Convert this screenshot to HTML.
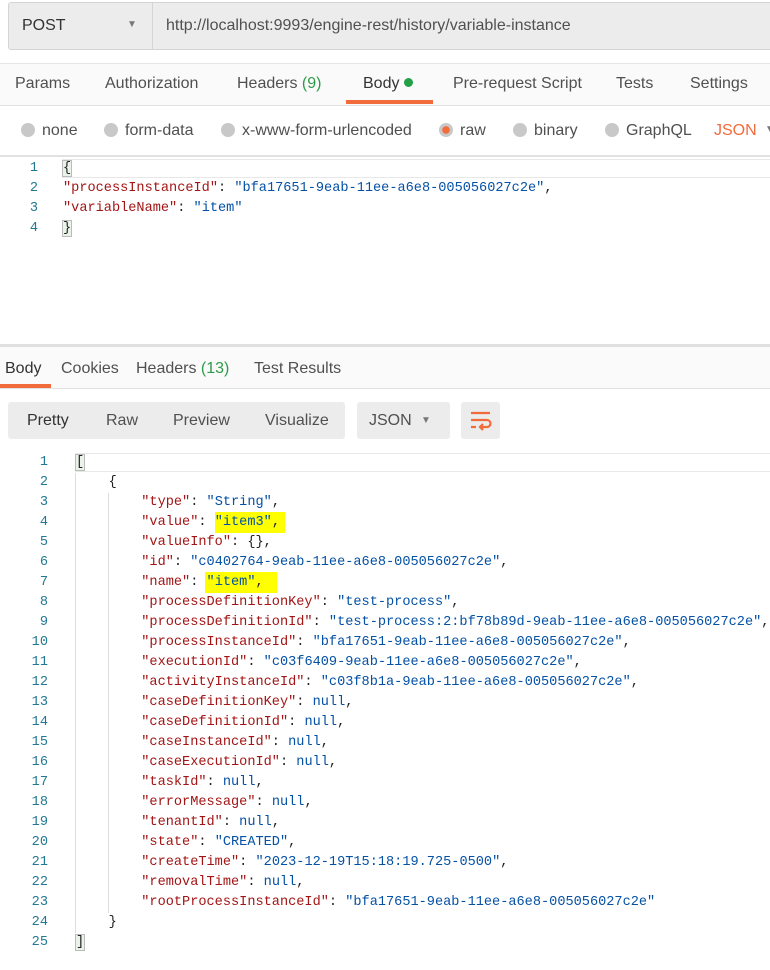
<!DOCTYPE html>
<html><head><meta charset="utf-8"><style>
*{margin:0;padding:0;box-sizing:border-box}
body{width:770px;height:970px;background:#fff;font-family:"Liberation Sans",sans-serif;color:#505050;position:relative;overflow:hidden;font-size:16px}
.a{position:absolute;white-space:nowrap}
.code{font-family:"Liberation Mono",monospace;font-size:13.6px;line-height:20px;white-space:pre}
.k{color:#a31515}.s{color:#0451a5}.p{color:#222}
.ln{color:#237893;text-align:right;width:20px}
.tab{top:75px}
.radio{display:inline-block;width:14px;height:14px;border-radius:50%;background:#c8c8c8;vertical-align:-2px;margin-right:7px}
</style></head><body>
<div class="a" style="left:8px;top:2px;width:770px;height:48px;background:#ececec;border:1px solid #d4d4d4;border-radius:3px"></div>
<div class="a" style="left:152px;top:3px;width:1px;height:46px;background:#d4d4d4"></div>
<div class="a" style="left:22px;top:17px;color:#333">POST</div>
<div class="a" style="left:127px;top:19px;font-size:10px;color:#777">▼</div>
<div class="a" style="left:166px;top:17px;color:#505050">http://localhost:9993/engine-rest/history/variable-instance</div>
<div class="a" style="left:0;top:63px;width:770px;height:1px;background:#e6e6e6"></div>
<div class="a" style="left:0;top:64px;width:770px;height:41px;background:#fafafa"></div>
<div class="a" style="left:0;top:105px;width:770px;height:1px;background:#e2e2e2"></div>
<div class="a tab" style="left:15px">Params</div>
<div class="a tab" style="left:105px">Authorization</div>
<div class="a tab" style="left:237px">Headers <span style="color:#2d9c4a">(9)</span></div>
<div class="a tab" style="left:363px;color:#333">Body <span style="display:inline-block;width:9px;height:9px;border-radius:50%;background:#22a046;vertical-align:1px"></span></div>
<div class="a" style="left:346px;top:100px;width:87px;height:4px;background:#f26b3a"></div>
<div class="a tab" style="left:453px">Pre-request Script</div>
<div class="a tab" style="left:616px">Tests</div>
<div class="a tab" style="left:690px">Settings</div>
<div class="a" style="left:21px;top:122px"><span class="radio"></span>none</div>
<div class="a" style="left:104px;top:122px"><span class="radio"></span>form-data</div>
<div class="a" style="left:221px;top:122px"><span class="radio"></span>x-www-form-urlencoded</div>
<div class="a" style="left:439px;top:122px"><span class="radio" style="background:radial-gradient(circle,#f26b3a 0 3.5px,#c8c8c8 4px)"></span>raw</div>
<div class="a" style="left:513px;top:122px"><span class="radio"></span>binary</div>
<div class="a" style="left:605px;top:122px"><span class="radio"></span>GraphQL</div>
<div class="a" style="left:714px;top:122px;color:#f26b3a">JSON</div>
<div class="a" style="left:765px;top:124px;font-size:10px;color:#777">▼</div>
<div class="a" style="left:0;top:155px;width:770px;height:2px;background:#e2e2e2"></div>
<div class="a" style="left:62px;top:159px;width:708px;height:19px;border-top:1px solid #e8e8e8;border-bottom:1px solid #e8e8e8"></div>
<div class="a code ln" style="left:18px;top:159px">1
2
3
4</div>
<div class="a code p" style="left:63px;top:159px"><span style="outline:1px solid #bbb;background:#eaf2ea">{</span>
<span class="k">"processInstanceId"</span>: <span class="s">"bfa17651-9eab-11ee-a6e8-005056027c2e"</span>,
<span class="k">"variableName"</span>: <span class="s">"item"</span>
<span style="outline:1px solid #bbb;background:#eaf2ea">}</span></div>
<div class="a" style="left:0;top:344px;width:770px;height:3px;background:#e0e0e0"></div>
<div class="a" style="left:0;top:347px;width:770px;height:41px;background:#fafafa"></div>
<div class="a" style="left:0;top:388px;width:770px;height:1px;background:#e2e2e2"></div>
<div class="a" style="left:5px;top:360px;color:#333">Body</div>
<div class="a" style="left:61px;top:360px">Cookies</div>
<div class="a" style="left:136px;top:360px">Headers <span style="color:#2d9c4a">(13)</span></div>
<div class="a" style="left:254px;top:360px">Test Results</div>
<div class="a" style="left:0;top:384px;width:51px;height:4px;background:#f26b3a"></div>
<div class="a" style="left:8px;top:402px;width:337px;height:37px;background:#ececec;border-radius:3px"></div>
<div class="a" style="left:27px;top:412px;color:#333">Pretty</div>
<div class="a" style="left:106px;top:412px">Raw</div>
<div class="a" style="left:173px;top:412px">Preview</div>
<div class="a" style="left:265px;top:412px">Visualize</div>
<div class="a" style="left:357px;top:402px;width:93px;height:37px;background:#ececec;border-radius:3px"></div>
<div class="a" style="left:369px;top:412px">JSON</div>
<div class="a" style="left:421px;top:415px;font-size:10px;color:#777">▼</div>
<div class="a" style="left:461px;top:402px;width:39px;height:37px;background:#ececec;border-radius:3px"></div>
<svg class="a" style="left:470px;top:410px" width="22" height="22" viewBox="0 0 22 22" fill="none" stroke="#f26b3a" stroke-width="2.2"><path d="M1 3h19M1 10h16a3.5 3.5 0 0 1 0 7H11M13 14l-3 3 3 3M1 17h5"/></svg>
<div class="a" style="left:75px;top:453px;width:695px;height:19px;border-top:1px solid #e8e8e8;border-bottom:1px solid #e8e8e8"></div>
<div class="a" style="left:75px;top:473px;width:1px;height:460px;background:#ddd"></div>
<div class="a" style="left:108px;top:493px;width:1px;height:420px;background:#ddd"></div>
<div class="a" style="left:215px;top:512px;width:70px;height:21px;background:#ffff00"></div>
<div class="a" style="left:205px;top:572px;width:72px;height:21px;background:#ffff00"></div>
<div class="a code ln" style="left:28px;top:453px">1
2
3
4
5
6
7
8
9
10
11
12
13
14
15
16
17
18
19
20
21
22
23
24
25</div>
<div class="a code p" style="left:76px;top:453px"><span style="outline:1px solid #bbb;background:#eaf2ea">[</span>
    {
        <span class="k">"type"</span>: <span class="s">"String"</span>,
        <span class="k">"value"</span>: <span class="s">"item3"</span>,
        <span class="k">"valueInfo"</span>: {},
        <span class="k">"id"</span>: <span class="s">"c0402764-9eab-11ee-a6e8-005056027c2e"</span>,
        <span class="k">"name"</span>: <span class="s">"item"</span>,
        <span class="k">"processDefinitionKey"</span>: <span class="s">"test-process"</span>,
        <span class="k">"processDefinitionId"</span>: <span class="s">"test-process:2:bf78b89d-9eab-11ee-a6e8-005056027c2e"</span>,
        <span class="k">"processInstanceId"</span>: <span class="s">"bfa17651-9eab-11ee-a6e8-005056027c2e"</span>,
        <span class="k">"executionId"</span>: <span class="s">"c03f6409-9eab-11ee-a6e8-005056027c2e"</span>,
        <span class="k">"activityInstanceId"</span>: <span class="s">"c03f8b1a-9eab-11ee-a6e8-005056027c2e"</span>,
        <span class="k">"caseDefinitionKey"</span>: <span class="s">null</span>,
        <span class="k">"caseDefinitionId"</span>: <span class="s">null</span>,
        <span class="k">"caseInstanceId"</span>: <span class="s">null</span>,
        <span class="k">"caseExecutionId"</span>: <span class="s">null</span>,
        <span class="k">"taskId"</span>: <span class="s">null</span>,
        <span class="k">"errorMessage"</span>: <span class="s">null</span>,
        <span class="k">"tenantId"</span>: <span class="s">null</span>,
        <span class="k">"state"</span>: <span class="s">"CREATED"</span>,
        <span class="k">"createTime"</span>: <span class="s">"2023-12-19T15:18:19.725-0500"</span>,
        <span class="k">"removalTime"</span>: <span class="s">null</span>,
        <span class="k">"rootProcessInstanceId"</span>: <span class="s">"bfa17651-9eab-11ee-a6e8-005056027c2e"</span>
    }
<span style="outline:1px solid #bbb;background:#eaf2ea">]</span></div>
</body></html>
